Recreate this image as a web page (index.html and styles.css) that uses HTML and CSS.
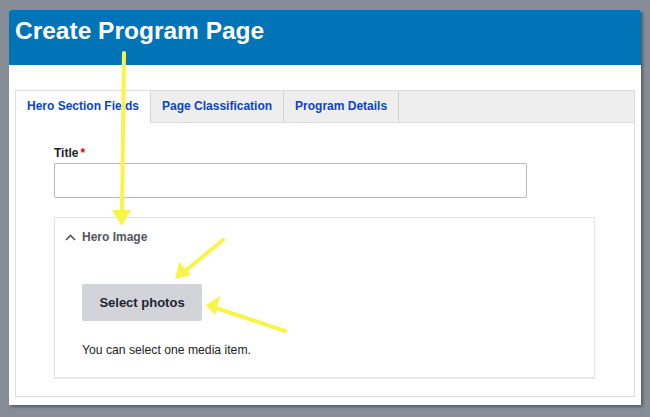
FILE: index.html
```html
<!DOCTYPE html>
<html lang="en">
<head>
    <meta charset="UTF-8">
    <meta name="viewport" content="width=device-width, initial-scale=1.0">
    <title>Create Program Page</title>
    <link rel="stylesheet" href="styles.css">
</head>
<body>
    <div class="dialog">
        <div class="dialog-header">
            <h1>Create Program Page</h1>
        </div>
        <div class="dialog-body">
            <div class="tabs">
                <ul class="tab-list">
                    <li class="tab active">Hero Section Fields</li>
                    <li class="tab">Page Classification</li>
                    <li class="tab">Program Details</li>
                </ul>
                <div class="tab-panel">
                    <label class="field-label" for="title-input">Title<span class="required">*</span></label>
                    <input type="text" id="title-input" class="text-input">

                    <div class="media-box">
                        <div class="media-summary">
                            <svg class="chevron" width="11" height="7" viewBox="0 0 11 7">
                                <path d="M1 6 L5.5 1.5 L10 6" fill="none" stroke="#55565b" stroke-width="1.6"/>
                            </svg>
                            <span>Hero Image</span>
                        </div>
                        <div class="media-content">
                            <button class="select-btn">Select photos</button>
                            <p class="help-text">You can select one media item.</p>
                        </div>
                    </div>
                </div>
            </div>
        </div>
    </div>

    <!-- annotation arrows drawn over the form -->
    <svg class="arrows" width="650" height="417" viewBox="0 0 650 417">
        <g stroke="#f8f44a" stroke-width="4" stroke-linecap="round" fill="none">
            <path d="M124 53 L122 214"/>
            <path d="M223 240 L184 272"/>
            <path d="M285 331 L216 308"/>
        </g>
        <g fill="#f8f44a">
            <polygon points="112,210 131,210 121.5,226"/>
            <polygon points="175,279 179,262 191,275"/>
            <polygon points="206,305 220,296 215,315"/>
        </g>
    </svg>
</body>
</html>
```

FILE: styles.css
```css
body {
    margin: 0;
    padding: 10px 9px 13px 9px;
    background-color: #868d96;
    font-family: "Liberation Sans", Arial, sans-serif;
    color: #222;
}
.dialog {
    background-color: #fff;
    box-shadow: 2px 2px 3px rgba(0, 0, 0, 0.35);
    border-radius: 2px 2px 0 0;
}
.dialog-header {
    background-color: #0074b7;
    height: 55px;
    padding: 0 6px;
    border-radius: 2px 2px 0 0;
}
.dialog-header h1 {
    margin: 0;
    color: #fff;
    font-size: 24.5px;
    line-height: 41px;
    font-weight: bold;
}
.dialog-body {
    padding: 25px 6px 8px 6px;
}
.tabs {
    border: 1px solid #dcdcdc;
}
.tab-list {
    display: flex;
    list-style: none;
    margin: 0;
    padding: 0;
    height: 31px;
    background-color: #eee;
    border-bottom: 1px solid #dcdcdc;
}
.tab {
    padding: 0 11px;
    line-height: 31px;
    font-size: 12px;
    font-weight: bold;
    color: #0b44c6;
    border-right: 1px solid #d4d4d4;
}
.tab.active {
    background-color: #fff;
    height: 32px;
}
.tab-panel {
    padding: 22px 39px 18px 38px;
}
.field-label {
    display: block;
    font-size: 12px;
    font-weight: bold;
    line-height: 16px;
    margin-bottom: 2px;
}
.required {
    color: #e00;
    margin-left: 2px;
}
.text-input {
    display: block;
    box-sizing: border-box;
    width: 473px;
    height: 35px;
    border: 1px solid #b8b8b8;
    border-radius: 2px;
    margin: 0;
}
.media-box {
    margin-top: 19px;
    width: 541px;
    box-sizing: border-box;
    height: 161px;
    border: 1px solid #e2e2e4;
    box-shadow: 0 1px 1px rgba(0, 0, 0, 0.06);
}
.media-summary {
    display: flex;
    align-items: center;
    padding: 12px 10px 0 10px;
    height: 14px;
    font-size: 12px;
    font-weight: bold;
    color: #55565b;
}
.chevron {
    margin-right: 6px;
}
.media-content {
    padding: 40px 27px 0 27px;
}
.select-btn {
    display: block;
    width: 120px;
    height: 37px;
    border: none;
    border-radius: 2px;
    background-color: #d3d4d9;
    font-family: "Liberation Sans", Arial, sans-serif;
    font-size: 13px;
    font-weight: bold;
    color: #222330;
}
.help-text {
    margin: 22px 0 0 0;
    font-size: 12.2px;
    line-height: 14px;
}
.arrows {
    position: absolute;
    left: 0;
    top: 0;
    pointer-events: none;
}
```
